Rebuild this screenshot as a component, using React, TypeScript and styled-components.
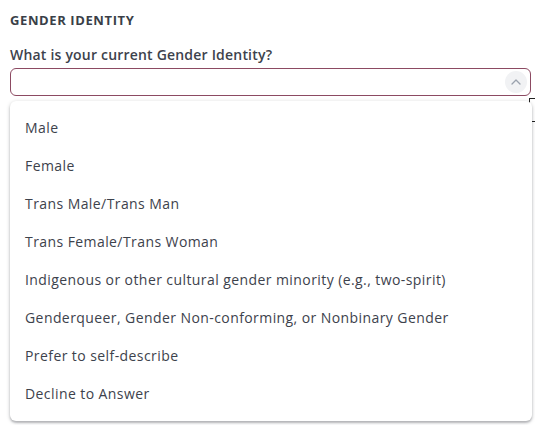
import * as React from 'react';
import styled, { createGlobalStyle } from 'styled-components';

const options = [
	'Male',
	'Female',
	'Trans Male/Trans Man',
	'Trans Female/Trans Woman',
	'Indigenous or other cultural gender minority (e.g., two-spirit)',
	'Genderqueer, Gender Non-conforming, or Nonbinary Gender',
	'Prefer to self-describe',
	'Decline to Answer',
];

export default function App() {
	return (
		<>
			<Global />
			<Page>
				<Heading>Gender Identity</Heading>
				<Label>What is your current Gender Identity?</Label>
				<Field>
					<Control>
						<Toggle>
							<svg width="12" height="12" viewBox="0 0 12 12" fill="none">
								<path d="M2 8l4-4 4 4" stroke="#9aa1ad" strokeWidth="1.3" strokeLinecap="round" strokeLinejoin="round" />
							</svg>
						</Toggle>
					</Control>
					<Behind />
					<Menu>
						{options.map((o) => (
							<Option key={o}>{o}</Option>
						))}
					</Menu>
				</Field>
			</Page>
		</>
	);
}

const Global = createGlobalStyle`
	body {
		margin: 0;
		background: #fff;
		font-family: 'Open Sans', 'Noto Sans', sans-serif;
		overflow: hidden;
	}
`;

const Page = styled.div`
	padding: 13px 4px 4px 10px;
`;

const Heading = styled.h3`
	margin: 0;
	font-size: 13px;
	font-weight: 700;
	letter-spacing: 0.6px;
	text-transform: uppercase;
	color: #3a3f48;
	line-height: 14px;
`;

const Label = styled.div`
	margin-top: 18px;
	font-size: 14px;
	font-weight: 600;
	letter-spacing: 0.2px;
	color: #3d424c;
	line-height: 20px;
`;

const Field = styled.div`
	position: relative;
	margin-top: 3px;
`;

const Control = styled.div`
	height: 28px;
	box-sizing: border-box;
	border: 1px solid #8c4a62;
	border-radius: 6px;
	display: flex;
	align-items: center;
	justify-content: flex-end;
	padding-right: 3px;
`;

const Toggle = styled.div`
	width: 22px;
	height: 22px;
	border-radius: 50%;
	background: #f1f2f4;
	display: flex;
	align-items: center;
	justify-content: center;
`;

const Behind = styled.div`
	position: absolute;
	top: 30px;
	right: -10px;
	width: 10px;
	height: 22px;
	border: 1px solid #222;
	z-index: 0;
`;

const Menu = styled.ul`
	position: relative;
	z-index: 1;
	margin: 5px -1px 0 0;
	padding: 7px 0 9px;
	list-style: none;
	background: #fff;
	border-radius: 6px;
	box-shadow: 0 1px 4px rgba(0, 0, 0, 0.2), 0 2px 2px rgba(60, 64, 80, 0.25);
`;

const Option = styled.li`
	height: 38px;
	display: flex;
	align-items: center;
	padding-left: 15px;
	font-size: 14px;
	font-weight: 500;
	letter-spacing: 0.42px;
	color: #3d424c;
`;
